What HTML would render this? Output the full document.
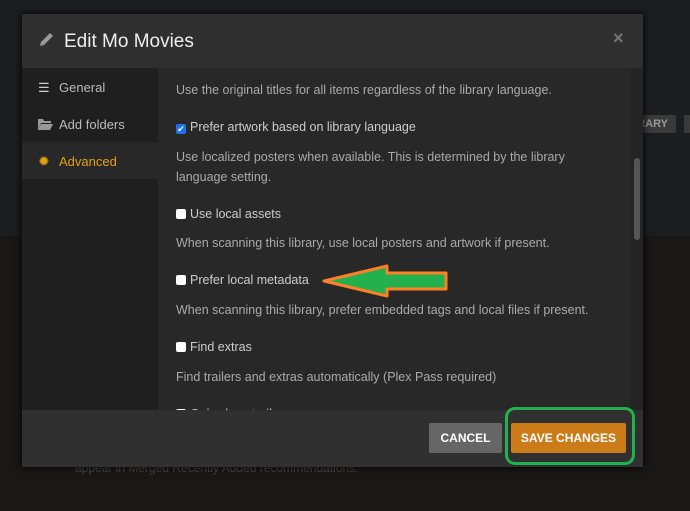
<!DOCTYPE html>
<html><head><style>
body{margin:0;width:690px;height:511px;overflow:hidden;background:#1a1816;font-family:"Liberation Sans",sans-serif;position:relative}
.bgtop{position:absolute;left:0;top:0;width:690px;height:236px;background:#1b1e1f}
.modal{position:absolute;left:22px;top:14px;width:621px;height:453px;background:#282828;box-shadow:0 0 8px #000}
.hdr{position:absolute;left:0;top:0;width:621px;height:54px;background:#2f2f2f}
.hdr h1{margin:0;position:absolute;left:42px;top:17px;font-size:19px;font-weight:normal;color:#eee}
.side{position:absolute;left:0;top:54px;width:136px;height:342px;background:#1f1f1f}
.side div{height:37px;line-height:39px;padding-left:37px;font-size:13px;color:#bbb;position:relative}
.side .act{background:#282828;color:#e5a00d}
.content{position:absolute;left:136px;top:55px;width:472px;height:341px;overflow:hidden;font-size:12.5px;color:#aaa}
.content p{position:absolute;left:18px;margin:0;line-height:20px}
.cb{display:inline-block;width:10px;height:10px;background:#fff;border-radius:2px;vertical-align:-1px;margin-right:4px}
.sb{position:absolute;left:608px;top:54px;width:13px;height:342px;background:#242424}
.thumb{position:absolute;left:4px;top:90px;width:6px;height:82px;background:#555;border-radius:3px}
.ftr{position:absolute;left:0;top:396px;width:621px;height:57px;background:#303030}
.btn{position:absolute;top:13px;height:30px;line-height:30px;font-size:12px;font-weight:bold;color:#fff;text-align:center;border-radius:2px}
</style></head><body>
<div class="bgtop"></div>
<div style="position:absolute;left:616px;top:115px;width:60px;height:18px;background:#3a3a3a;color:#999;font-size:11px;font-weight:bold;line-height:18px;border-radius:2px;text-align:right;box-sizing:border-box;padding-right:8px">RARY</div>
<div style="position:absolute;left:684px;top:115px;width:10px;height:18px;background:#3a3a3a"></div>
<div style="position:absolute;left:75px;top:461px;color:#4a4a4a;font-size:12px">appear in Merged Recently Added recommendations.</div>
<div class="modal">
<div class="hdr">
<svg style="position:absolute;left:16px;top:17px" width="17" height="17" viewBox="0 0 17 17"><path d="M2 15 L3 11 L12 2 L15 5 L6 14 Z" fill="#999"/></svg>
<h1>Edit Mo Movies</h1>
<div style="position:absolute;left:591px;top:14px;color:#777;font-size:18px;font-weight:bold">×</div>
</div>
<div class="side">
<div><span style="position:absolute;left:16px;top:0;color:#ccc">☰</span>General</div>
<div><svg style="position:absolute;left:16px;top:13px" width="15" height="12"><path d="M0 1h5l1 2h7v2H3L0 12Z M3 6h12l-3 6H0Z" fill="#999"/></svg>Add folders</div>
<div class="act"><span style="position:absolute;left:16px;top:0;font-size:14px">✹</span>Advanced</div>
</div>
<div class="content">
<p style="top:11px">Use the original titles for all items regardless of the library language.</p>
<p style="top:48px;color:#ccc"><span class="cb" style="background:#1a73e8;color:#fff;font-size:9px;line-height:10px;text-align:center">✔</span>Prefer artwork based on library language</p>
<p style="top:78px">Use localized posters when available. This is determined by the library<br>language setting.</p>
<p style="top:135px;color:#ccc"><span class="cb"></span>Use local assets</p>
<p style="top:164px">When scanning this library, use local posters and artwork if present.</p>
<p style="top:201px;color:#ccc"><span class="cb"></span>Prefer local metadata</p>
<p style="top:231px">When scanning this library, prefer embedded tags and local files if present.</p>
<p style="top:268px;color:#ccc"><span class="cb"></span>Find extras</p>
<p style="top:298px">Find trailers and extras automatically (Plex Pass required)</p>
<p style="top:335px;color:#ccc"><span class="cb"></span>Only show trailers</p>
</div>
<div class="sb"><div class="thumb"></div></div>
<div class="ftr">
<div class="btn" style="left:407px;width:73px;background:#666">CANCEL</div>
<div class="btn" style="left:489px;width:115px;background:#cc7b19">SAVE CHANGES</div>
<div style="position:absolute;left:483px;top:-3px;width:124px;height:52px;border:3px solid #22b14c;border-radius:10px"></div>
</div>
</div>
<svg style="position:absolute;left:0;top:0" width="690" height="511"><path d="M324 281 L387 266 L387 273 L446 273 L446 289 L387 289 L387 296 Z" fill="#22b14c" stroke="#ff7f27" stroke-width="3" stroke-linejoin="round"/></svg>
</body></html>
